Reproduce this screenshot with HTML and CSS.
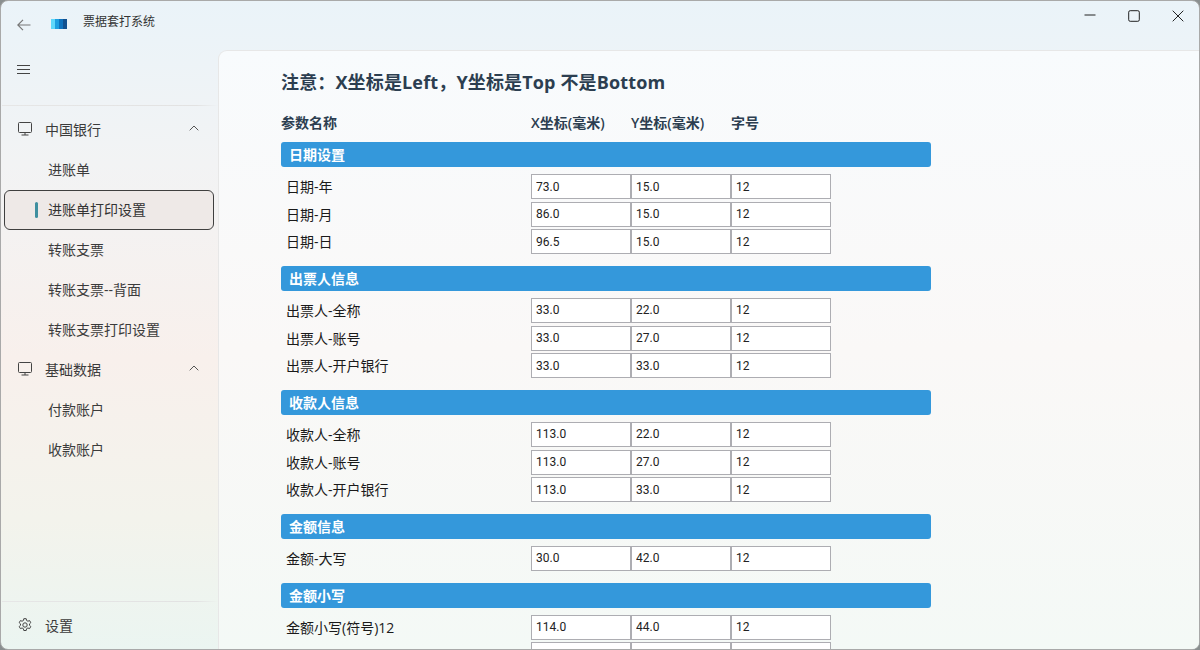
FILE: index.html
```html
<!DOCTYPE html>
<html lang="zh-CN">
<head>
  <meta charset="UTF-8">
  <title>票据套打系统</title>
  <link rel="stylesheet" href="styles.css">
</head>
<body>
<div class="window">
  <header class="titlebar">
    <svg class="back" width="14" height="12" viewBox="0 0 14 12"><path d="M13.500 6H1M6 .8.800 6 6 11.200" fill="none" stroke="#777" stroke-width="1.200"/></svg>
    <svg class="logo" width="16" height="10" viewBox="0 0 16 10">
      <rect x="0" width="4" height="10" fill="#5fd8fb"/>
      <rect x="4" width="4" height="10" fill="#1e9fe0"/>
      <rect x="8" width="4" height="10" fill="#0f72bd"/>
      <rect x="12" width="4" height="10" fill="#11508f"/>
    </svg>
    <span class="app-name">票据套打系统</span>
    <div class="win-buttons">
      <svg width="12" height="12" viewBox="0 0 12 12"><path d="M.5 5h11" stroke="#222" stroke-width="1"/></svg>
      <svg width="12" height="12" viewBox="0 0 12 12"><rect x=".7" y=".7" width="10.600" height="10.600" rx="1.500" fill="none" stroke="#222" stroke-width="1"/></svg>
      <svg width="12" height="12" viewBox="0 0 12 12"><path d="M.7.7l10.600 10.600M11.300.7.7 11.300" stroke="#222" stroke-width="1"/></svg>
    </div>
  </header>

  <div class="main">
    <aside class="sidebar">
      <div class="menu-btn">
        <svg width="13" height="9" viewBox="0 0 13 9"><path d="M0 .5h13M0 4.500h13M0 8.500h13" stroke="#444" stroke-width="1"/></svg>
      </div>
      <div class="side-line"></div>
      <nav class="nav">
        <div class="nav-item group">
          <svg class="nav-icon" width="14" height="14" viewBox="0 0 14 14"><path d="M1.500.5h11a1 1 0 0 1 1 1v8a1 1 0 0 1-1 1h-11a1 1 0 0 1-1-1v-8a1 1 0 0 1 1-1zM7 10.500v2.500M3.500 13h7" fill="none" stroke="#444" stroke-width="1"/></svg>
          <span>中国银行</span>
          <svg class="chevron" width="10" height="6" viewBox="0 0 10 6"><path d="M.7 5.300 5 1l4.300 4.300" fill="none" stroke="#555" stroke-width="1"/></svg>
        </div>
        <div class="nav-item sub">进账单</div>
        <div class="nav-item sub selected"><i class="marker"></i>进账单打印设置</div>
        <div class="nav-item sub">转账支票</div>
        <div class="nav-item sub">转账支票--背面</div>
        <div class="nav-item sub">转账支票打印设置</div>
        <div class="nav-item group">
          <svg class="nav-icon" width="14" height="14" viewBox="0 0 14 14"><path d="M1.500.5h11a1 1 0 0 1 1 1v8a1 1 0 0 1-1 1h-11a1 1 0 0 1-1-1v-8a1 1 0 0 1 1-1zM7 10.500v2.500M3.500 13h7" fill="none" stroke="#444" stroke-width="1"/></svg>
          <span>基础数据</span>
          <svg class="chevron" width="10" height="6" viewBox="0 0 10 6"><path d="M.7 5.300 5 1l4.300 4.300" fill="none" stroke="#555" stroke-width="1"/></svg>
        </div>
        <div class="nav-item sub">付款账户</div>
        <div class="nav-item sub">收款账户</div>
      </nav>
      <div class="side-line"></div>
      <div class="nav-item group settings">
        <svg class="nav-icon" width="14" height="14" viewBox="0 0 14 14"><circle cx="7" cy="7" r="2.200" fill="none" stroke="#444"/><path d="M5.800.7h2.400l.4 1.800 1.300.7 1.700-.6 1.200 2.100-1.300 1.200v1.400l1.300 1.200-1.200 2.100-1.700-.6-1.300.7-.4 1.800H5.800l-.4-1.800-1.300-.7-1.700.6L1.200 8.500l1.300-1.200V5.900L1.200 4.700l1.200-2.100 1.700.6 1.300-.7z" fill="none" stroke="#444" stroke-width="1"/></svg>
        <span>设置</span>
      </div>
    </aside>

    <section class="content">
      <h1 class="notice">注意&#xFF1A;X坐标是Left&#xFF0C;Y坐标是Top 不是Bottom</h1>
      <div class="row head">
        <span>参数名称</span><span>X坐标(毫米)</span><span>Y坐标(毫米)</span><span>字号</span>
      </div>

      <div class="section">
        <div class="bar">日期设置</div>
        <div class="row"><label>日期-年</label><input value="73.0"><input value="15.0"><input value="12"></div>
        <div class="row"><label>日期-月</label><input value="86.0"><input value="15.0"><input value="12"></div>
        <div class="row"><label>日期-日</label><input value="96.5"><input value="15.0"><input value="12"></div>
      </div>

      <div class="section">
        <div class="bar">出票人信息</div>
        <div class="row"><label>出票人-全称</label><input value="33.0"><input value="22.0"><input value="12"></div>
        <div class="row"><label>出票人-账号</label><input value="33.0"><input value="27.0"><input value="12"></div>
        <div class="row"><label>出票人-开户银行</label><input value="33.0"><input value="33.0"><input value="12"></div>
      </div>

      <div class="section">
        <div class="bar">收款人信息</div>
        <div class="row"><label>收款人-全称</label><input value="113.0"><input value="22.0"><input value="12"></div>
        <div class="row"><label>收款人-账号</label><input value="113.0"><input value="27.0"><input value="12"></div>
        <div class="row"><label>收款人-开户银行</label><input value="113.0"><input value="33.0"><input value="12"></div>
      </div>

      <div class="section">
        <div class="bar">金额信息</div>
        <div class="row"><label>金额-大写</label><input value="30.0"><input value="42.0"><input value="12"></div>
      </div>

      <div class="section">
        <div class="bar">金额小写</div>
        <div class="row"><label>金额小写(符号)12</label><input value="114.0"><input value="44.0"><input value="12"></div>
        <div class="row"><label></label><input value=""><input value=""><input value=""></div>
      </div>
    </section>
  </div>
</div>
</body>
</html>
```

FILE: styles.css
```css
* {
  box-sizing: border-box;
}

html, body {
  margin: 0;
  height: 100%;
  background: #8a8f90;
  overflow: hidden;
}

body {
  font-family: "Open Sans", "Noto Sans CJK SC", sans-serif;
  font-size: 14px;
  color: #1a1a1a;
}

svg {
  display: block;
}

.window {
  width: 1200px;
  height: 650px;
  border: 1px solid #a9a9a9;
  border-radius: 8px;
  overflow: hidden;
  display: flex;
  flex-direction: column;
  background: linear-gradient(180deg, #eaf3f9 0%, #f2f3f4 25%, #f8f0ec 55%, #f3f3ec 80%, #ebf5f1 100%);
}

.titlebar {
  height: 49px;
  flex: none;
  display: flex;
  align-items: flex-start;
  padding-left: 16px;
}

.back {
  margin-top: 18px;
}

.logo {
  margin: 18px 0 0 20px;
}

.app-name {
  margin: 11px 0 0 16px;
  font-size: 12px;
  line-height: 20px;
  color: #333;
}

.win-buttons {
  margin-left: auto;
  margin-top: 9px;
  padding-right: 15px;
  display: flex;
  gap: 32px;
}

.main {
  flex: 1;
  display: flex;
  min-height: 0;
}

.sidebar {
  width: 217px;
  flex: none;
  display: flex;
  flex-direction: column;
}

.menu-btn {
  height: 55px;
  padding: 15px 0 0 16px;
}

.side-line {
  height: 1px;
  margin-left: 1px;
  background: linear-gradient(90deg, #e6e6e6, #e2e2e2 90%, rgba(230, 230, 230, 0));
  flex: none;
}

.nav {
  flex: 1;
  padding-top: 4px;
}

.nav-item {
  height: 40px;
  padding-bottom: 2px;
  display: flex;
  align-items: center;
  position: relative;
  color: #3b3b3b;
  font-size: 14px;
}

.group {
  padding-left: 17px;
}

.nav-icon {
  margin-right: 13px;
  flex: none;
}

.chevron {
  position: absolute;
  left: 188px;
  top: 15px;
}

.sub {
  padding-left: 47px;
}

.selected {
  margin: 0 4px 0 3px;
  padding-left: 43px;
  background: #eee9e7;
  border: 1px solid #3f3f3f;
  border-radius: 6px;
  color: #333;
}

.marker {
  position: absolute;
  left: 30px;
  top: 11px;
  width: 3px;
  height: 16px;
  border-radius: 2px;
  background: #3f8f9f;
}

.settings {
  height: 47px;
}

.content {
  flex: 1;
  min-width: 0;
  border: 1px solid #e7e7e7;
  border-right: 0;
  border-bottom: 0;
  border-top-left-radius: 9px;
  padding: 18px 0 0 62px;
  overflow: hidden;
  background: linear-gradient(180deg, #f8fbfd 0%, #faf8f7 50%, #f4f9f6 100%);
}

.notice {
  margin: 0 0 18px;
  font-size: 18px;
  line-height: 26px;
  font-weight: 700;
  letter-spacing: .15px;
  color: #2c3e50;
}

.row {
  display: grid;
  grid-template-columns: 250px 100px 100px 100px;
  height: 27.670px;
  align-items: start;
}

.row label {
  padding-left: 5px;
  font-size: 14px;
  line-height: 25px;
  color: #1a1a1a;
}

.row input {
  width: 100px;
  height: 25px;
  border: 1px solid #adadb2;
  border-radius: 0;
  background: #fff;
  padding: 0 4px;
  font: 12px Roboto, sans-serif;
  color: #222;
  outline: none;
}

.head {
  height: 29px;
  font-size: 14px;
  font-weight: 600;
  line-height: 20px;
  color: #2c3e50;
}

.section {
  margin-bottom: 9px;
}

.bar {
  width: 650px;
  height: 25px;
  margin-bottom: 7px;
  padding-left: 8px;
  background: #3498db;
  border-radius: 3px;
  color: #fff;
  font-size: 14px;
  font-weight: 700;
  line-height: 25px;
}
```
